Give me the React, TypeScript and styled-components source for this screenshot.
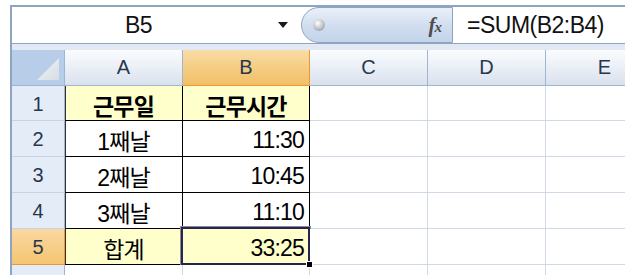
import React from "react";
import styled, { createGlobalStyle } from "styled-components";

const GlobalStyle = createGlobalStyle`
  html, body {
    margin: 0;
    padding: 0;
    background: #ffffff;
    overflow: hidden;
  }
  body {
    width: 625px;
    height: 275px;
    font-family: "Liberation Sans", "Noto Sans CJK KR", sans-serif;
  }
`;

const palette = {
  frame: "#8ea4c0",
  band: "#e3e9f2",
  headerBorder: "#9eb6ce",
  grid: "#d0d7e5",
  headerText: "#27384d",
  activeBorder: "#f29536",
  yellow: "#ffffcc",
};

const Frame = styled.div`
  margin: 5px 0 0 10px;
  width: 615px;
  height: 270px;
  overflow: hidden;
  border-top: 2px solid ${palette.frame};
  border-left: 2px solid ${palette.frame};
  background: ${palette.band};
`;

const FormulaRow = styled.div`
  display: flex;
  height: 36px;
  background: #ffffff;
  border-bottom: 1px solid ${palette.frame};
`;

const NameBox = styled.div`
  width: 289px;
  flex-shrink: 0;
  display: flex;
  align-items: center;
  .name {
    flex: 1;
    text-align: center;
    font-size: 23px;
    color: #111;
    letter-spacing: -0.5px;
  }
  .arrow {
    width: 36px;
    display: flex;
    justify-content: center;
    i {
      width: 0;
      height: 0;
      border-left: 5px solid transparent;
      border-right: 5px solid transparent;
      border-top: 6px solid #1a1a1a;
    }
  }
`;

const Pill = styled.div`
  box-sizing: border-box;
  width: 152px;
  flex-shrink: 0;
  height: 36px;
  display: flex;
  align-items: center;
  justify-content: space-between;
  padding: 0 11px 0 11px;
  border: 1px solid ${palette.frame};
  border-radius: 18px 0 0 18px;
  background: linear-gradient(#eaf0f8, #d0ddef 55%, #c3d4ea);
  .knob {
    width: 12px;
    height: 12px;
    border-radius: 50%;
    background: radial-gradient(circle at 40% 35%, #ffffff, #b4b8bd 60%, #8c9096);
  }
`;

const Fx = styled.span`
  font-family: "Liberation Serif", "DejaVu Serif", serif;
  font-style: italic;
  font-weight: bold;
  font-size: 21px;
  color: #4e4e4e;
  letter-spacing: -1px;
  small {
    font-size: 15px;
  }
`;

const FormulaInput = styled.div`
  flex: 1;
  display: flex;
  align-items: center;
  padding-left: 14px;
  font-size: 23px;
  color: #111;
  letter-spacing: -0.5px;
  white-space: nowrap;
`;

const Band = styled.div`
  height: 6px;
`;

const Sheet = styled.div`
  display: grid;
  grid-template-columns: 53px 118px 127px 118px 118px 118px;
  grid-template-rows: 36px 35px 36px 36px 36px 36px 20px;
  background: #ffffff;
`;

const Corner = styled.div`
  box-sizing: border-box;
  background: #b8cde8;
  border-right: 1px solid ${palette.headerBorder};
  border-bottom: 1px solid ${palette.headerBorder};
  display: flex;
  align-items: flex-end;
  justify-content: flex-end;
  padding: 0 5px 5px 0;
`;

const ColHeader = styled.div<{ $active?: boolean }>`
  box-sizing: border-box;
  display: flex;
  align-items: center;
  justify-content: center;
  font-size: 20px;
  color: ${palette.headerText};
  border-right: 1px solid ${({ $active }) => ($active ? palette.activeBorder : palette.headerBorder)};
  border-bottom: 1px solid ${({ $active }) => ($active ? palette.activeBorder : palette.headerBorder)};
  background: ${({ $active }) =>
    $active
      ? "linear-gradient(#f9dca8, #f5cd83 50%, #f1c066)"
      : "linear-gradient(#fafcfe, #eaeff6 50%, #d9e1ec)"};
`;

const RowHeader = styled.div<{ $active?: boolean }>`
  box-sizing: border-box;
  display: flex;
  align-items: center;
  justify-content: center;
  padding-top: 2px;
  font-size: 20px;
  color: ${palette.headerText};
  border-right: 1px solid ${({ $active }) => ($active ? palette.activeBorder : palette.headerBorder)};
  border-bottom: 1px solid ${({ $active }) => ($active ? palette.activeBorder : "#c5d3e3")};
  background: ${({ $active }) => ($active ? "linear-gradient(#f9d8a0, #f4c572)" : "#e4ecf7")};
`;

const Cell = styled.div<{
  $align?: "left" | "center" | "right";
  $fill?: boolean;
  $boxed?: boolean;
  $bold?: boolean;
  $selected?: boolean;
  $edge?: boolean;
}>`
  box-sizing: border-box;
  position: relative;
  display: flex;
  align-items: center;
  justify-content: ${({ $align }) =>
    $align === "right" ? "flex-end" : $align === "center" ? "center" : "flex-start"};
  padding: 3px 5px 0;
  font-size: 23px;
  font-weight: ${({ $bold }) => ($bold ? "bold" : "normal")};
  letter-spacing: -0.8px;
  color: #000;
  background: ${({ $fill }) => ($fill ? palette.yellow : "#ffffff")};
  border-right: 1px solid ${({ $boxed }) => ($boxed ? "#000" : palette.grid)};
  border-bottom: 1px solid ${({ $boxed }) => ($boxed ? "#000" : palette.grid)};
  box-shadow: ${({ $edge }) => ($edge ? "inset 1px 0 0 #333" : "none")};

  ${({ $selected }) =>
    $selected &&
    `
    &::after {
      content: "";
      position: absolute;
      top: -2px;
      left: -2px;
      right: -1px;
      bottom: -1px;
      border: 2px solid #25254d;
      outline: 1px solid #8a8aa6;
      pointer-events: none;
    }
    &::before {
      content: "";
      position: absolute;
      right: -4px;
      bottom: -4px;
      width: 5px;
      height: 5px;
      background: #000;
      border: 1px solid #fff;
      z-index: 2;
    }
  `}
`;

interface RowData {
  day: string;
  hours: string;
  head?: boolean;
  total?: boolean;
}

const rows: RowData[] = [
  { day: "근무일", hours: "근무시간", head: true },
  { day: "1째날", hours: "11:30" },
  { day: "2째날", hours: "10:45" },
  { day: "3째날", hours: "11:10" },
  { day: "합계", hours: "33:25", total: true },
];

const columns = ["A", "B", "C", "D", "E"];

const CornerTriangle = () => (
  <svg width="22" height="22" viewBox="0 0 22 22">
    <defs>
      <linearGradient id="tri" x1="0" y1="0" x2="1" y2="1">
        <stop offset="0" stopColor="#f4f6f9" />
        <stop offset="1" stopColor="#d6dce4" />
      </linearGradient>
    </defs>
    <polygon points="22,0 22,22 0,22" fill="url(#tri)" />
  </svg>
);

const App: React.FC = () => {
  return (
    <>
      <GlobalStyle />
      <Frame>
        <FormulaRow>
          <NameBox>
            <span className="name">B5</span>
            <span className="arrow">
              <i />
            </span>
          </NameBox>
          <Pill>
            <span className="knob" />
            <Fx>
              f<small>x</small>
            </Fx>
          </Pill>
          <FormulaInput>=SUM(B2:B4)</FormulaInput>
        </FormulaRow>
        <Band />
        <Sheet>
          <Corner>
            <CornerTriangle />
          </Corner>
          {columns.map((col) => (
            <ColHeader key={col} $active={col === "B"}>
              {col}
            </ColHeader>
          ))}

          {rows.map((row, i) => (
            <React.Fragment key={i}>
              <RowHeader $active={row.total}>{i + 1}</RowHeader>
              <Cell $align="center" $boxed $edge $fill={row.head || row.total} $bold={row.head}>
                {row.day}
              </Cell>
              <Cell
                $align={row.head ? "center" : "right"}
                $boxed
                $fill={row.head || row.total}
                $bold={row.head}
                $selected={row.total}
              >
                {row.hours}
              </Cell>
              <Cell />
              <Cell />
              <Cell />
            </React.Fragment>
          ))}

          <RowHeader />
          <Cell />
          <Cell />
          <Cell />
          <Cell />
          <Cell />
        </Sheet>
      </Frame>
    </>
  );
};

export default App;
